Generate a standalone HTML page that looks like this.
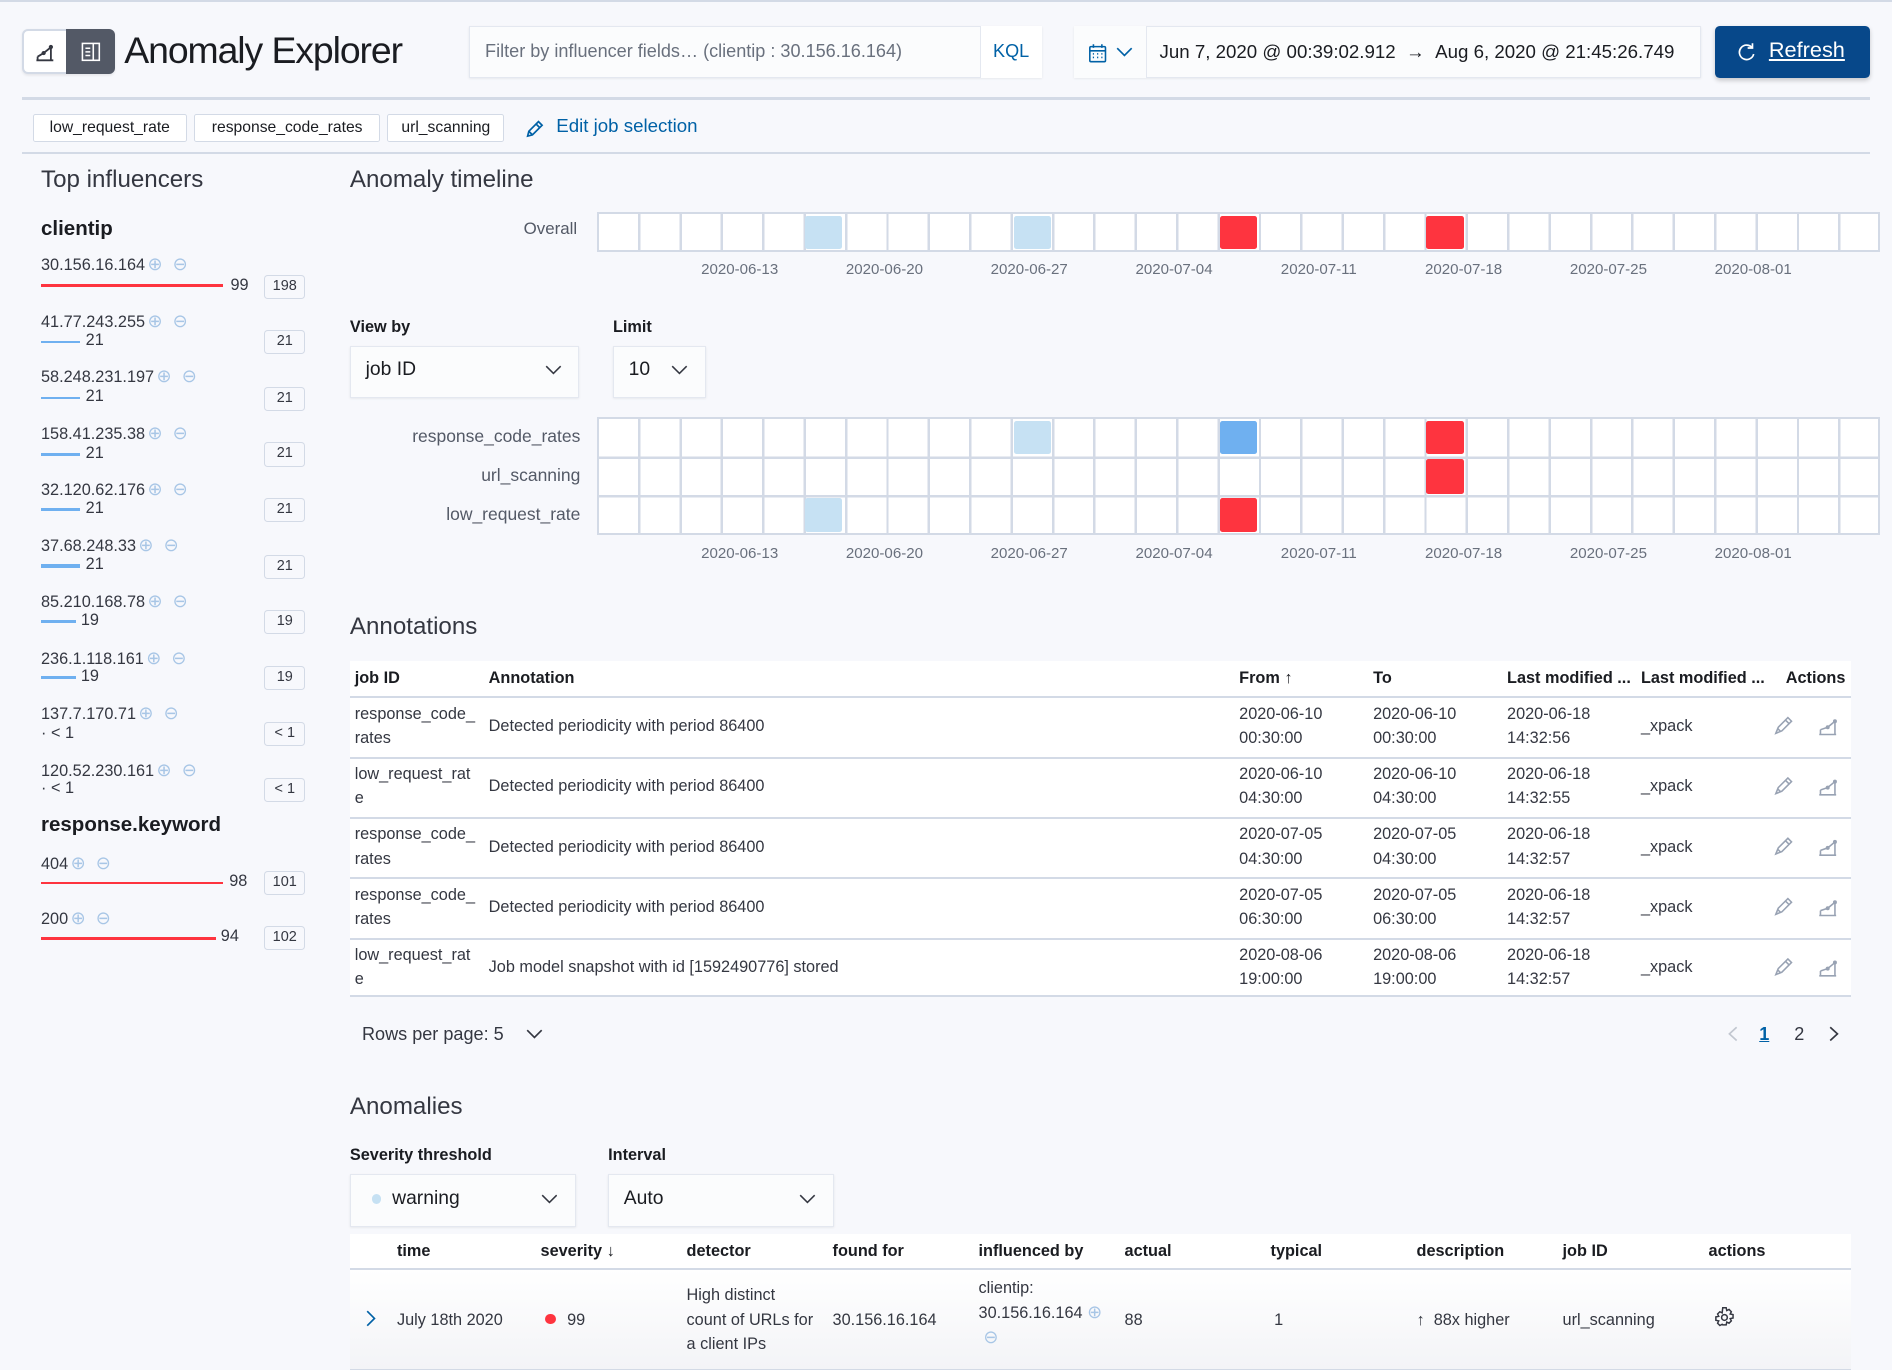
<!DOCTYPE html>
<html><head><meta charset="utf-8">
<style>
html,body{margin:0;padding:0;background:#f7f8fc;overflow:hidden}
body{width:1892px;height:1370px;}
#w{position:relative;width:1568px;height:1136px;zoom:1.2066;font-family:"Liberation Sans",sans-serif;color:#343741;font-size:14px;border-top:2px solid #d3dae6;box-sizing:border-box}
.a{position:absolute;white-space:nowrap}
.t{color:#343741}
.g{color:#69707d}
.b{font-weight:bold;color:#1a1c21}
.hr{position:absolute;height:2px;background:#d3dae6}
.box{position:absolute;background:#fbfcfd;border:1px solid #e4e8f0;box-shadow:0 1px 2px rgba(0,0,0,.08);box-sizing:border-box}
.chip{position:absolute;top:93px;height:23px;border:1px solid #d3dae6;background:#fff;box-sizing:border-box;font-size:13px;line-height:21px;text-align:center;color:#1a1c21;border-radius:2px}
.grid{position:absolute;left:495px;width:1063px;border:2px solid #d3dae6;box-sizing:border-box;background-color:#fff;background-image:repeating-linear-gradient(to right,transparent 0,transparent 32.3px,#d3dae6 32.3px,#d3dae6 34.3px)}
.c{position:absolute;width:31px;border-radius:2px}
.lb{background:#c6e1f3}.rd{background:#fe343f}.bl{background:#6fb0f0}
.dl{position:absolute;font-size:12.5px;color:#69707d;transform:translateX(-50%)}
.ip{position:absolute;left:34px;font-size:13.5px;color:#343741}
.ic{color:#a8c6e6;font-size:15px;margin-left:2px}
.bar{position:absolute;left:34px;height:2px}
.cnt{position:absolute;left:219px;width:34px;height:20px;border:1.5px solid #d3dae6;border-radius:3px;font-size:12px;text-align:center;line-height:18px;box-sizing:border-box;color:#343741}
.sc{position:absolute;font-size:13.5px;color:#343741;left:71px}
.tbl{position:absolute;left:290px;width:1244px;background:#fff}
.row{position:absolute;left:0;width:1244px;border-bottom:2px solid #d3dae6;box-sizing:border-box}
.cell{position:absolute;font-size:13.5px;line-height:20px;color:#343741}
.th{position:absolute;font-size:13.5px;font-weight:bold;color:#1a1c21}
</style></head><body><div id="w">

<!-- header -->
<div class="box" style="left:18px;top:22px;width:77px;height:38px;border-radius:5px;background:#fff;border:2px solid #d3dae6"></div>
<div class="a" style="left:55px;top:22px;width:40px;height:38px;background:#535966;border-radius:0 5px 5px 0"></div>
<svg class="a" style="left:28px;top:32px" width="18" height="18" viewBox="0 0 18 18" fill="none" stroke="#343741" stroke-width="1.5"><path d="M2 16h14M3 13l5-3 5-4M3 16v-3M14 16V6"/><circle cx="8" cy="10" r="1" fill="#343741"/><circle cx="14" cy="5" r="1" fill="#343741"/></svg>
<svg class="a" style="left:66px;top:32px" width="18" height="18" viewBox="0 0 18 18" fill="none" stroke="#fff" stroke-width="1.3"><rect x="2" y="2" width="14" height="14"/><path d="M11 2v14M4.5 6h4M4.5 9h4M4.5 12h4"/></svg>
<div class="a" style="left:103px;top:22px;font-size:31px;color:#1a1c21;letter-spacing:-0.9px">Anomaly Explorer</div>

<div class="box" style="left:389px;top:20px;width:475px;height:43px"></div>
<div class="a g" style="left:402px;top:32px;font-size:15px;color:#69707d">Filter by influencer fields… (clientip : 30.156.16.164)</div>
<div class="a" style="left:812px;top:20px;width:52px;height:43px;border-left:1px solid #e4e8f0;background:#fff;box-sizing:border-box"></div>
<div class="a" style="left:823px;top:32px;font-size:15px;color:#0061a6">KQL</div>

<div class="box" style="left:890px;top:20px;width:520px;height:43px"></div>
<div class="a" style="left:890px;top:20px;width:61px;height:43px;background:#fbfcfd;border-right:1px solid #e4e8f0;box-sizing:border-box"></div>
<svg class="a" style="left:902px;top:34px" width="16" height="17" viewBox="0 0 16 17" fill="none" stroke="#0061a6" stroke-width="1.3"><rect x="1.5" y="3" width="13" height="12.5" rx="1"/><path d="M1.5 6.5h13M4.5 1v3M11.5 1v3M4 9h1M7.5 9h1M11 9h1M4 12h1M7.5 12h1M11 12h1"/></svg>
<svg class="a" style="left:925px;top:37px" width="14" height="9" viewBox="0 0 14 9" fill="none" stroke="#0061a6" stroke-width="1.4"><path d="M1 1l6 6 6-6"/></svg>
<div class="a" style="left:961px;top:32px;font-size:15.5px;color:#1a1c21">Jun 7, 2020 @ 00:39:02.912 &nbsp;→ &nbsp;Aug 6, 2020 @ 21:45:26.749</div>

<div class="a" style="left:1421px;top:20px;width:129px;height:43px;background:#07488a;border-radius:4px;box-shadow:0 2px 4px rgba(0,0,0,.2)"></div>
<svg class="a" style="left:1440px;top:33px" width="16" height="17" viewBox="0 0 16 17" fill="none" stroke="#fff" stroke-width="1.4"><path d="M12 5a6 6 0 1 0 1 5"/><path d="M12 1v4H8"/></svg>
<div class="a" style="left:1466px;top:29px;font-size:18px;color:#fff;text-decoration:underline">Refresh</div>

<div class="hr" style="left:18px;top:79px;width:1532px"></div>
<div class="chip" style="left:27px;width:128px">low_request_rate</div>
<div class="chip" style="left:161px;width:154px">response_code_rates</div>
<div class="chip" style="left:321px;width:97px">url_scanning</div>
<svg class="a" style="left:434px;top:96px" width="18" height="18" viewBox="0 0 18 18" fill="none" stroke="#0061a6" stroke-width="1.4"><path d="M3 15l1-4 8-8 3 3-8 8zM10 5l3 3M4 11l3 3"/></svg>
<div class="a" style="left:461px;top:94px;font-size:15.5px;color:#0061a6">Edit job selection</div>
<div class="hr" style="left:18px;top:124px;width:1532px"></div>

<!-- left column -->
<div class="a" style="left:34px;top:136px;font-size:20px;color:#343741">Top influencers</div>
<div class="a b" style="left:34px;top:178px;font-size:17px">clientip</div>

<div class="ip" style="top:209px">30.156.16.164<span class="ic">⊕ &nbsp;⊖</span></div>
<div class="bar" style="top:234px;width:151px;background:#fe343f"></div><div class="a" style="left:191px;top:227px;font-size:13.5px">99</div>
<div class="cnt" style="top:226px">198</div>

<div class="ip" style="top:256px">41.77.243.255<span class="ic">⊕ &nbsp;⊖</span></div>
<div class="bar" style="top:281px;width:32px;background:#6fb0f0"></div><div class="sc" style="top:273px">21</div><div class="cnt" style="top:272px">21</div>

<div class="ip" style="top:302px">58.248.231.197<span class="ic">⊕ &nbsp;⊖</span></div>
<div class="bar" style="top:327px;width:32px;background:#6fb0f0"></div><div class="sc" style="top:319px">21</div><div class="cnt" style="top:319px">21</div>

<div class="ip" style="top:349px">158.41.235.38<span class="ic">⊕ &nbsp;⊖</span></div>
<div class="bar" style="top:374px;width:32px;background:#6fb0f0"></div><div class="sc" style="top:366px">21</div><div class="cnt" style="top:365px">21</div>

<div class="ip" style="top:395px">32.120.62.176<span class="ic">⊕ &nbsp;⊖</span></div>
<div class="bar" style="top:419px;width:32px;height:3px;background:#6fb0f0"></div><div class="sc" style="top:412px">21</div><div class="cnt" style="top:411px">21</div>

<div class="ip" style="top:442px">37.68.248.33<span class="ic">⊕ &nbsp;⊖</span></div>
<div class="bar" style="top:466px;width:32px;height:3px;background:#6fb0f0"></div><div class="sc" style="top:458px">21</div><div class="cnt" style="top:458px">21</div>

<div class="ip" style="top:488px">85.210.168.78<span class="ic">⊕ &nbsp;⊖</span></div>
<div class="bar" style="top:512px;width:29px;height:3px;background:#6fb0f0"></div><div class="sc" style="top:505px;left:67px">19</div><div class="cnt" style="top:504px">19</div>

<div class="ip" style="top:535px">236.1.118.161<span class="ic">⊕ &nbsp;⊖</span></div>
<div class="bar" style="top:559px;width:29px;height:2px;background:#6fb0f0"></div><div class="sc" style="top:551px;left:67px">19</div><div class="cnt" style="top:550px">19</div>

<div class="ip" style="top:581px">137.7.170.71<span class="ic">⊕ &nbsp;⊖</span></div>
<div class="sc" style="top:598px;left:34px">· &lt; 1</div><div class="cnt" style="top:597px">&lt; 1</div>

<div class="ip" style="top:628px">120.52.230.161<span class="ic">⊕ &nbsp;⊖</span></div>
<div class="sc" style="top:644px;left:34px">· &lt; 1</div><div class="cnt" style="top:643px">&lt; 1</div>

<div class="a b" style="left:34px;top:672px;font-size:17px">response.keyword</div>
<div class="ip" style="top:705px">404<span class="ic">⊕ &nbsp;⊖</span></div>
<div class="bar" style="top:729px;width:151px;background:#fe343f"></div><div class="a" style="left:190px;top:721px;font-size:13.5px">98</div><div class="cnt" style="top:720px">101</div>
<div class="ip" style="top:751px">200<span class="ic">⊕ &nbsp;⊖</span></div>
<div class="bar" style="top:775px;width:145px;background:#fe343f"></div><div class="a" style="left:183px;top:767px;font-size:13.5px">94</div><div class="cnt" style="top:766px">102</div>

<!-- timeline -->
<div class="a" style="left:290px;top:136px;font-size:20px;color:#343741">Anomaly timeline</div>
<div class="a g" style="left:434px;top:180px;font-size:14px;color:#535966">Overall</div>
<div class="grid" style="top:174px;height:33px"></div>
<div class="c lb" style="left:667px;top:177px;height:28px"></div>
<div class="c lb" style="left:840px;top:177px;height:28px"></div>
<div class="c rd" style="left:1011px;top:177px;height:28px"></div>
<div class="c rd" style="left:1182px;top:177px;height:28px"></div>
<div class="dl" style="left:613px;top:215px">2020-06-13</div><div class="dl" style="left:733px;top:215px">2020-06-20</div><div class="dl" style="left:853px;top:215px">2020-06-27</div><div class="dl" style="left:973px;top:215px">2020-07-04</div><div class="dl" style="left:1093px;top:215px">2020-07-11</div><div class="dl" style="left:1213px;top:215px">2020-07-18</div><div class="dl" style="left:1333px;top:215px">2020-07-25</div><div class="dl" style="left:1453px;top:215px">2020-08-01</div>

<div class="a b" style="left:290px;top:262px;font-size:13.5px">View by</div>
<div class="box" style="left:290px;top:285px;width:190px;height:43px"></div>
<div class="a" style="left:303px;top:296px;font-size:16px;color:#1a1c21">job ID</div>
<svg class="a" style="left:452px;top:301px" width="14" height="9" viewBox="0 0 14 9" fill="none" stroke="#343741" stroke-width="1.3"><path d="M1 1l6 6 6-6"/></svg>
<div class="a b" style="left:508px;top:262px;font-size:13.5px">Limit</div>
<div class="box" style="left:508px;top:285px;width:77px;height:43px"></div>
<div class="a" style="left:521px;top:296px;font-size:16px;color:#1a1c21">10</div>
<svg class="a" style="left:556px;top:301px" width="14" height="9" viewBox="0 0 14 9" fill="none" stroke="#343741" stroke-width="1.3"><path d="M1 1l6 6 6-6"/></svg>

<div class="a" style="left:290px;top:351px;width:191px;text-align:right;font-size:14.5px;color:#535966">response_code_rates</div>
<div class="a" style="left:290px;top:384px;width:191px;text-align:right;font-size:14.5px;color:#535966">url_scanning</div>
<div class="a" style="left:290px;top:416px;width:191px;text-align:right;font-size:14.5px;color:#535966">low_request_rate</div>
<div class="grid" style="top:344px;height:98px;background-image:repeating-linear-gradient(to right,transparent 0,transparent 32.3px,#d3dae6 32.3px,#d3dae6 34.3px),linear-gradient(to bottom,transparent 31px,#d3dae6 31px,#d3dae6 33px,transparent 33px,transparent 63px,#d3dae6 63px,#d3dae6 65px,transparent 65px)"></div>
<div class="c lb" style="left:840px;top:347px;height:28px"></div>
<div class="c bl" style="left:1011px;top:347px;height:28px"></div>
<div class="c rd" style="left:1182px;top:347px;height:28px"></div>
<div class="c rd" style="left:1182px;top:379px;height:29px"></div>
<div class="c lb" style="left:667px;top:411px;height:28px"></div>
<div class="c rd" style="left:1011px;top:411px;height:28px"></div>
<div class="dl" style="left:613px;top:450px">2020-06-13</div><div class="dl" style="left:733px;top:450px">2020-06-20</div><div class="dl" style="left:853px;top:450px">2020-06-27</div><div class="dl" style="left:973px;top:450px">2020-07-04</div><div class="dl" style="left:1093px;top:450px">2020-07-11</div><div class="dl" style="left:1213px;top:450px">2020-07-18</div><div class="dl" style="left:1333px;top:450px">2020-07-25</div><div class="dl" style="left:1453px;top:450px">2020-08-01</div>

<!-- annotations -->
<div class="a" style="left:290px;top:506px;font-size:20px;color:#343741">Annotations</div>
<div class="tbl" style="top:546px;height:279px">
 <div class="row" style="top:0;height:31px"></div>
 <div class="th" style="left:4px;top:7px">job ID</div><div class="th" style="left:115px;top:7px">Annotation</div><div class="th" style="left:737px;top:7px">From ↑</div><div class="th" style="left:848px;top:7px">To</div><div class="th" style="left:959px;top:7px">Last modified ...</div><div class="th" style="left:1070px;top:7px">Last modified ...</div><div class="th" style="left:1190px;top:7px">Actions</div>
</div>
<div class="tbl" style="top:577px;height:248px;background:#fff">
 <div class="row" style="top:0;height:50px"></div><div class="row" style="top:50px;height:50px"></div><div class="row" style="top:100px;height:50px"></div><div class="row" style="top:150px;height:50px"></div><div class="row" style="top:200px;height:48px"></div>

 <div class="cell" style="left:4px;top:3px">response_code_<br>rates</div><div class="cell" style="left:115px;top:13px">Detected periodicity with period 86400</div><div class="cell" style="left:737px;top:3px">2020-06-10<br>00:30:00</div><div class="cell" style="left:848px;top:3px">2020-06-10<br>00:30:00</div><div class="cell" style="left:959px;top:3px">2020-06-18<br>14:32:56</div><div class="cell" style="left:1070px;top:13px">_xpack</div>
 <div class="cell" style="left:4px;top:53px">low_request_rat<br>e</div><div class="cell" style="left:115px;top:63px">Detected periodicity with period 86400</div><div class="cell" style="left:737px;top:53px">2020-06-10<br>04:30:00</div><div class="cell" style="left:848px;top:53px">2020-06-10<br>04:30:00</div><div class="cell" style="left:959px;top:53px">2020-06-18<br>14:32:55</div><div class="cell" style="left:1070px;top:63px">_xpack</div>
 <div class="cell" style="left:4px;top:103px">response_code_<br>rates</div><div class="cell" style="left:115px;top:113px">Detected periodicity with period 86400</div><div class="cell" style="left:737px;top:103px">2020-07-05<br>04:30:00</div><div class="cell" style="left:848px;top:103px">2020-07-05<br>04:30:00</div><div class="cell" style="left:959px;top:103px">2020-06-18<br>14:32:57</div><div class="cell" style="left:1070px;top:113px">_xpack</div>
 <div class="cell" style="left:4px;top:153px">response_code_<br>rates</div><div class="cell" style="left:115px;top:163px">Detected periodicity with period 86400</div><div class="cell" style="left:737px;top:153px">2020-07-05<br>06:30:00</div><div class="cell" style="left:848px;top:153px">2020-07-05<br>06:30:00</div><div class="cell" style="left:959px;top:153px">2020-06-18<br>14:32:57</div><div class="cell" style="left:1070px;top:163px">_xpack</div>
 <div class="cell" style="left:4px;top:203px">low_request_rat<br>e</div><div class="cell" style="left:115px;top:213px">Job model snapshot with id [1592490776] stored</div><div class="cell" style="left:737px;top:203px">2020-08-06<br>19:00:00</div><div class="cell" style="left:848px;top:203px">2020-08-06<br>19:00:00</div><div class="cell" style="left:959px;top:203px">2020-06-18<br>14:32:57</div><div class="cell" style="left:1070px;top:213px">_xpack</div>
</div>
<svg class="a" style="left:1468px;top:590px" width="60" height="220" viewBox="0 0 60 220" fill="none" stroke="#98a2b3" stroke-width="1.3">
 <g id="ic"><path d="M4 16l2-5 8-8 3 3-8 8zM12 5l3 3M5.5 12l2.5 2.5"/><path d="M40 17h14M41 13l6-2 6-5M41 17v-4M53 17V7"/><circle cx="47" cy="11" r="1" fill="#98a2b3"/><circle cx="53" cy="6" r="1" fill="#98a2b3"/></g>
 <use href="#ic" y="50"/><use href="#ic" y="100"/><use href="#ic" y="150"/><use href="#ic" y="200"/>
</svg>

<div class="a" style="left:300px;top:847px;font-size:15px;color:#343741">Rows per page: 5</div>
<svg class="a" style="left:436px;top:851px" width="14" height="9" viewBox="0 0 14 9" fill="none" stroke="#343741" stroke-width="1.4"><path d="M1 1l6 6 6-6"/></svg>
<svg class="a" style="left:1431px;top:849px" width="9" height="13" viewBox="0 0 9 13" fill="none" stroke="#c2c7d0" stroke-width="1.4"><path d="M8 1L2 6.5 8 12"/></svg>
<div class="a" style="left:1458px;top:847px;font-size:15px;color:#0061a6;font-weight:bold;text-decoration:underline">1</div>
<div class="a" style="left:1487px;top:847px;font-size:15px;color:#343741">2</div>
<svg class="a" style="left:1516px;top:849px" width="9" height="13" viewBox="0 0 9 13" fill="none" stroke="#343741" stroke-width="1.4"><path d="M1 1l6 5.5L1 12"/></svg>

<!-- anomalies -->
<div class="a" style="left:290px;top:904px;font-size:20px;color:#343741">Anomalies</div>
<div class="a b" style="left:290px;top:948px;font-size:13.5px">Severity threshold</div>
<div class="box" style="left:290px;top:971px;width:187px;height:44px"></div>
<div class="a" style="left:308px;top:988px;width:8px;height:8px;border-radius:50%;background:#c6e1f3"></div>
<div class="a" style="left:325px;top:983px;font-size:16px;color:#1a1c21">warning</div>
<svg class="a" style="left:448px;top:988px" width="14" height="9" viewBox="0 0 14 9" fill="none" stroke="#343741" stroke-width="1.3"><path d="M1 1l6 6 6-6"/></svg>
<div class="a b" style="left:504px;top:948px;font-size:13.5px">Interval</div>
<div class="box" style="left:504px;top:971px;width:187px;height:44px"></div>
<div class="a" style="left:517px;top:983px;font-size:16px;color:#1a1c21">Auto</div>
<svg class="a" style="left:662px;top:988px" width="14" height="9" viewBox="0 0 14 9" fill="none" stroke="#343741" stroke-width="1.3"><path d="M1 1l6 6 6-6"/></svg>

<div class="tbl" style="top:1021px;height:115px">
 <div class="row" style="top:0;height:30px"></div>
 <div class="row" style="top:30px;height:84px;background:linear-gradient(#fff,#f3f4f7)"></div>
 <div class="th" style="left:39px;top:7px">time</div><div class="th" style="left:158px;top:7px">severity ↓</div><div class="th" style="left:279px;top:7px">detector</div><div class="th" style="left:400px;top:7px">found for</div><div class="th" style="left:521px;top:7px">influenced by</div><div class="th" style="left:642px;top:7px">actual</div><div class="th" style="left:763px;top:7px">typical</div><div class="th" style="left:884px;top:7px">description</div><div class="th" style="left:1005px;top:7px">job ID</div><div class="th" style="left:1126px;top:7px">actions</div>
 <svg style="position:absolute;left:13px;top:63px" width="9" height="14" viewBox="0 0 9 14" fill="none" stroke="#0061a6" stroke-width="1.4"><path d="M1 1l6 6-6 6"/></svg>
 <div class="cell" style="left:39px;top:61px">July 18th 2020</div>
 <div style="position:absolute;left:162px;top:66px;width:9px;height:9px;border-radius:50%;background:#fe343f"></div>
 <div class="cell" style="left:180px;top:61px">99</div>
 <div class="cell" style="left:279px;top:41px">High distinct<br>count of URLs for<br>a client IPs</div>
 <div class="cell" style="left:400px;top:61px">30.156.16.164</div>
 <div class="cell" style="left:521px;top:35px">clientip:<br>30.156.16.164 <span style="color:#a8c6e6;font-size:15px">⊕</span><br><span style="color:#a8c6e6;margin-left:4px;font-size:15px">⊖</span></div>
 <div class="cell" style="left:642px;top:61px">88</div>
 <div class="cell" style="left:766px;top:61px">1</div>
 <div class="cell" style="left:884px;top:61px">↑ &nbsp;88x higher</div>
 <div class="cell" style="left:1005px;top:61px">url_scanning</div>
 <svg style="position:absolute;left:1130px;top:60px" width="19" height="19" viewBox="0 0 20 20" fill="none" stroke="#343741" stroke-width="1.3"><path d="M8.5 1.5h3l.5 2.5 2-1 2 2-1 2 2.5.5v3l-2.5.5 1 2-2 2-2-1-.5 2.5h-3L8 16l-2 1-2-2 1-2-2.5-.5v-3L5 9 4 7l2-2 2 1z"/><circle cx="10" cy="10" r="2.5"/></svg>
</div>

</div></body></html>
